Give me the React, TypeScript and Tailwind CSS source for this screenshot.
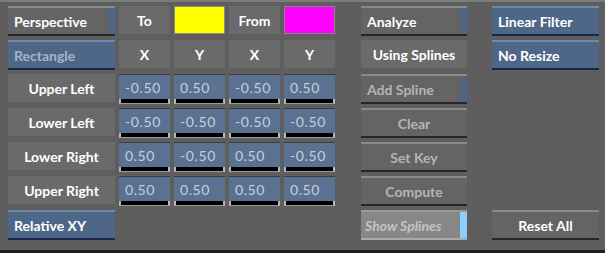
import React from "react";

const FONT = { fontFamily: "Lato, 'Open Sans', sans-serif" };

function GrayButton({ label, dim, strip }: { label: string; dim?: boolean; strip?: boolean }) {
  return (
    <div className="flex h-[30px] border-t-2 border-t-[#8a8a8a] border-b-2 border-b-[#262626] bg-[#646464]">
      <div
        className={`flex flex-1 items-center ${strip ? "justify-start pl-[6px]" : "justify-center"} text-[14px] font-bold ${
          dim ? "text-[#b4b4b4]" : "text-white"
        }`}
      >
        {label}
      </div>
      {strip && <div className="w-[6px] bg-[#4c6688]" />}
    </div>
  );
}

function BlueButton({ label, muted }: { label: string; muted?: boolean }) {
  return (
    <div
      className={`flex h-[30px] items-center border-t-2 border-t-[#6f87a8] border-b-2 border-b-[#1b2545] bg-[#4e6789] pl-[6px] text-[14px] font-bold ${
        muted ? "text-[#a6b4c8]" : "text-white"
      }`}
    >
      {label}
    </div>
  );
}

function Label({ label }: { label: string }) {
  return (
    <div className="flex h-[28px] items-center justify-center bg-[#6a6a6a] text-[14px] font-bold text-white">
      {label}
    </div>
  );
}

function Field({ value }: { value: string }) {
  return (
    <div className="flex h-[30px] flex-col border-t border-t-[#3c3c3c] bg-[#5a7191]">
      <div className="flex flex-1 items-center pl-[6px] text-[14px] tracking-[0.6px] text-[#c6cfdb]">{value}</div>
      <div className="h-[5px] border-l-2 border-r-2 border-b border-l-[#b8b8b8] border-r-[#b8b8b8] border-b-[#9a9a9a] bg-black" />
    </div>
  );
}

const rows: [string, string[]][] = [
  ["Upper Left", ["-0.50", "0.50", "-0.50", "0.50"]],
  ["Lower Left", ["-0.50", "-0.50", "-0.50", "-0.50"]],
  ["Lower Right", ["0.50", "-0.50", "0.50", "-0.50"]],
  ["Upper Right", ["0.50", "0.50", "0.50", "0.50"]],
];

export default function App() {
  return (
    <div className="h-[253px] w-[605px] overflow-hidden bg-[#5e5e5e]" style={FONT}>
      <div className="h-[2px] bg-[#7c7c7c]" />
      <div className="flex h-[248px] pl-[8px] pt-[4px]">
        <div className="grid grid-cols-[107px_51px_51px_51px_51px] auto-rows-[30px] gap-x-[4px] gap-y-[4px]">
          <GrayButton label="Perspective" strip />
          <Label label="To" />
          <div className="h-[28px] border border-[#8a8a8a] bg-[#ffff00]" />
          <Label label="From" />
          <div className="h-[28px] border border-[#8a8a8a] bg-[#ff00ff]" />

          <BlueButton label="Rectangle" muted />
          <Label label="X" />
          <Label label="Y" />
          <Label label="X" />
          <Label label="Y" />

          {rows.map(([name, vals]) => (
            <React.Fragment key={name}>
              <Label label={name} />
              {vals.map((v, i) => (
                <Field key={i} value={v} />
              ))}
            </React.Fragment>
          ))}

          <BlueButton label="Relative XY" />
        </div>

        <div className="ml-[26px] grid w-[106px] auto-rows-[30px] gap-y-[4px]">
          <GrayButton label="Analyze" strip />
          <Label label="Using Splines" />
          <GrayButton label="Add Spline" dim strip />
          <GrayButton label="Clear" dim />
          <GrayButton label="Set Key" dim />
          <GrayButton label="Compute" dim />
          <div className="flex h-[30px] border-t-2 border-t-[#9a9a9a] border-b-2 border-b-[#aaaaaa] bg-[#878787]">
            <div className="flex flex-1 items-center pl-[4px] text-[14px] font-bold italic text-[#c4c4c4]">Show Splines</div>
            <div className="w-[7px] bg-[#8ecffb]" />
          </div>
        </div>

        <div className="ml-[25px] grid w-[107px] auto-rows-[30px] gap-y-[4px]">
          <BlueButton label="Linear Filter" />
          <BlueButton label="No Resize" />
          <div />
          <div />
          <div />
          <div />
          <GrayButton label="Reset All" />
        </div>
      </div>
      <div className="h-[3px] bg-[#1e1e1e]" />
    </div>
  );
}
